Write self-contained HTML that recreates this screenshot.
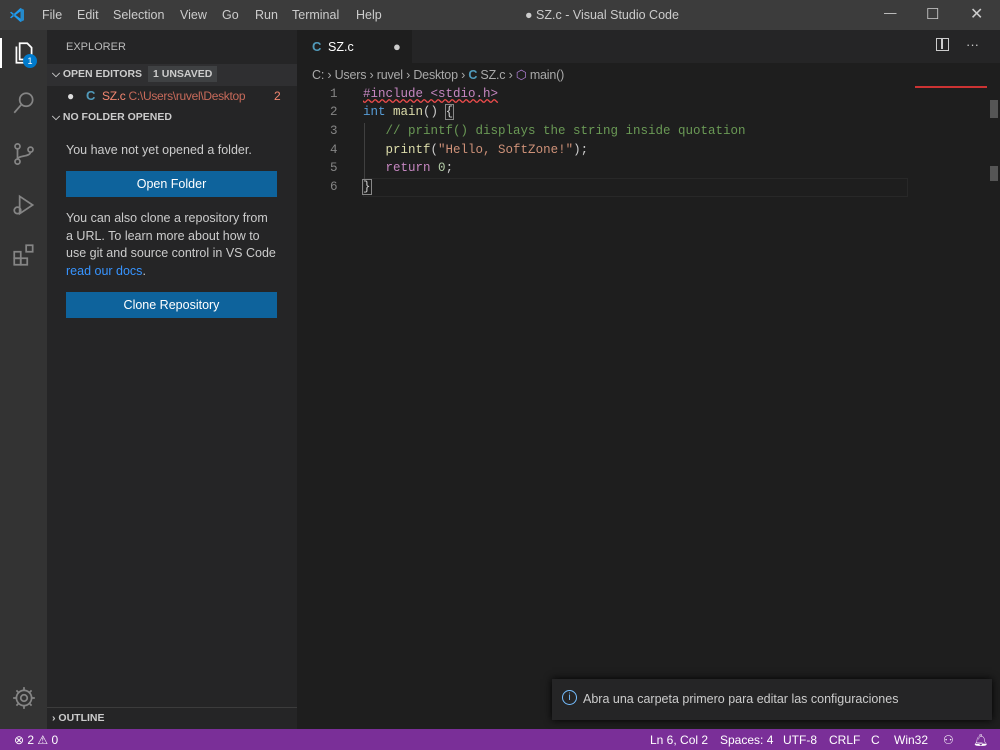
<!DOCTYPE html>
<html><head><meta charset="utf-8"><style>
*{margin:0;padding:0;box-sizing:border-box}
body{width:1000px;height:750px;overflow:hidden;background:#1e1e1e;font-family:"Liberation Sans",sans-serif;color:#ccc;position:relative;font-size:13px}
.abs{position:absolute}
#title{left:0;top:0;width:1000px;height:30px;background:#3c3c3c}
#title span{position:absolute;top:8px;font-size:12.5px;color:#ccc}
#act{left:0;top:30px;width:47px;height:699px;background:#333}
#side{left:47px;top:30px;width:250px;height:699px;background:#252526}
#tabs{left:297px;top:30px;width:703px;height:33px;background:#252526}
#tab{left:297px;top:30px;width:115px;height:33px;background:#1e1e1e}
#status{left:0;top:729px;width:1000px;height:21px;background:#7a2f98;color:#fff;font-size:12px}
#status span{position:absolute;top:4px}
.code{font-family:"Liberation Mono",monospace;font-size:12.5px;position:absolute;left:363px;white-space:pre}
.ln{font-family:"Liberation Mono",monospace;font-size:12.5px;position:absolute;left:330px;color:#858585}
.btn{position:absolute;left:66px;width:211px;height:26px;background:#0e639c;color:#fff;text-align:center;line-height:26px;font-size:12.5px}
.hdr{position:absolute;font-size:11px;font-weight:bold;color:#ccc}
</style></head><body>
<div id="title" class="abs">
<svg class="abs" style="left:9px;top:7px" width="16" height="16" viewBox="0 0 16 16"><path d="M11.5 1 L15 2.7 V13.3 L11.5 15 L4 8 Z" fill="#2489ca"/><path d="M11.5 4.5 V11.5 L6.5 8 Z" fill="#3c3c3c"/><path d="M1 5.5 L2.2 4.8 L11.5 12 V15 Z M1 10.5 L2.2 11.2 L11.5 4 V1Z" fill="#1f9cf0"/></svg>
<span style="left:42px">File</span><span style="left:77px">Edit</span><span style="left:113px">Selection</span><span style="left:180px">View</span><span style="left:222px">Go</span><span style="left:255px">Run</span><span style="left:292px">Terminal</span><span style="left:356px">Help</span>
<span style="left:525px">● SZ.c - Visual Studio Code</span>
<span style="left:884px;top:6px">—</span><span style="left:926px;top:5px;font-size:15px">☐</span><span style="left:970px;top:4px;font-size:16px">✕</span>
</div>
<div id="act" class="abs">
<div class="abs" style="left:0;top:8px;width:2px;height:30px;background:#fff"></div>
<svg class="abs" style="left:11px;top:10px" width="26" height="26" viewBox="0 0 24 24" fill="none" stroke="#fff" stroke-width="1.6"><path d="M8 3h7l4 4v11H8z"/><path d="M5 6v15h11"/></svg>
<div class="abs" style="left:23px;top:24px;width:14px;height:14px;border-radius:7px;background:#007acc;color:#fff;font-size:9px;text-align:center;line-height:14px">1</div>
<svg class="abs" style="left:11px;top:60px" width="26" height="26" viewBox="0 0 24 24" fill="none" stroke="#858585" stroke-width="1.6"><circle cx="14" cy="9" r="6"/><path d="M10 13L3 21"/></svg>
<svg class="abs" style="left:11px;top:111px" width="26" height="26" viewBox="0 0 24 24" fill="none" stroke="#858585" stroke-width="1.6"><circle cx="6" cy="5" r="2.3"/><circle cx="6" cy="19" r="2.3"/><circle cx="18" cy="8" r="2.3"/><path d="M6 7v10M18 10c0 5-12 3-12 7"/></svg>
<svg class="abs" style="left:11px;top:162px" width="26" height="26" viewBox="0 0 24 24" fill="none" stroke="#858585" stroke-width="1.6"><path d="M8 4l12 8-12 8z"/><circle cx="6" cy="17" r="3"/></svg>
<svg class="abs" style="left:11px;top:212px" width="26" height="26" viewBox="0 0 24 24" fill="none" stroke="#858585" stroke-width="1.6"><rect x="3" y="9" width="6" height="6"/><rect x="3" y="15" width="6" height="6"/><rect x="9" y="15" width="6" height="6"/><rect x="14" y="3" width="6" height="6"/></svg>
<svg class="abs" style="left:11px;top:655px" width="26" height="26" viewBox="0 0 24 24" fill="none" stroke="#858585" stroke-width="1.6"><circle cx="12" cy="12" r="3"/><path d="M12 2v3M12 19v3M2 12h3M19 12h3M5 5l2 2M17 17l2 2M5 19l2-2M17 7l2-2"/><circle cx="12" cy="12" r="7"/></svg>
</div>
<div id="side" class="abs">
<div class="abs" style="left:19px;top:11px;font-size:11px;color:#bbb">EXPLORER</div>
<div class="abs" style="left:0;top:34px;width:250px;height:22px;background:#2f2f31"></div>
<div class="hdr" style="left:5px;top:38px;font-size:10.5px">⌵ OPEN EDITORS</div>
<div class="abs" style="left:101px;top:36px;background:#3f4143;padding:2px 5px;font-size:10.5px;font-weight:bold;color:#ccc">1 UNSAVED</div>
<div class="abs" style="left:20px;top:59px;font-size:12px;color:#ddd">●</div>
<div class="abs" style="left:39px;top:58px;font-weight:bold;color:#519aba">C</div>
<div class="abs" style="left:55px;top:59px;color:#f48771;font-size:12px;letter-spacing:-0.3px">SZ.c <span style="color:#c76a5a">C:\Users\ruvel\Desktop</span></div>
<div class="abs" style="left:227px;top:59px;color:#f48771;font-size:12px">2</div>
<div class="hdr" style="left:5px;top:81px;font-size:10.5px">⌵ NO FOLDER OPENED</div>
<div class="abs" style="left:19px;top:113px;font-size:12.5px">You have not yet opened a folder.</div>
<div class="btn" style="left:19px;top:141px">Open Folder</div>
<div class="abs" style="left:19px;top:180px;width:230px;line-height:17.7px;font-size:12.5px;white-space:nowrap">You can also clone a repository from<br>a URL. To learn more about how to<br>use git and source control in VS Code<br><span style="color:#3794ff">read our docs</span>.</div>
<div class="btn" style="left:19px;top:262px">Clone Repository</div>
<div class="abs" style="left:0;top:677px;width:250px;height:1px;background:#3c3c3c"></div>
<div class="hdr" style="left:5px;top:682px;font-size:10.5px">› OUTLINE</div>
</div>
<div id="tabs" class="abs"></div>
<div id="tab" class="abs">
<div class="abs" style="left:15px;top:9px;font-weight:bold;color:#519aba">C</div>
<div class="abs" style="left:31px;top:10px;color:#fff;font-size:12.5px">SZ.c</div>
<div class="abs" style="left:96px;top:9px;color:#ccc">●</div>
</div>
<div class="abs" style="left:936px;top:38px;width:13px;height:13px;border:1.5px solid #ccc"><div style="margin-left:4px;width:1.5px;height:10px;background:#ccc"></div></div>
<div class="abs" style="left:966px;top:37px;color:#ccc">···</div>
<div class="abs" style="left:312px;top:67px;color:#a9a9a9;font-size:12.5px;letter-spacing:-0.2px">C: › Users › ruvel › Desktop › <b style="color:#519aba">C</b> SZ.c › <span style="color:#b180d7">⬡</span> main()</div>
<div class="ln" style="top:87px">1</div><div class="ln" style="top:105px">2</div><div class="ln" style="top:124px">3</div><div class="ln" style="top:143px">4</div><div class="ln" style="top:161px">5</div><div class="ln" style="top:180px">6</div>
<div class="code" style="top:87px;color:#c586c0;text-decoration:underline wavy #f14c4c">#include &lt;stdio.h&gt;</div>
<div class="code" style="top:105px"><span style="color:#569cd6">int</span> <span style="color:#dcdcaa">main</span>() <span style="outline:1px solid #888">{</span></div>
<div class="code" style="top:124px;color:#6a9955">   // printf() displays the string inside quotation</div>
<div class="code" style="top:143px">   <span style="color:#dcdcaa">printf</span>(<span style="color:#ce9178">"Hello, SoftZone!"</span>);</div>
<div class="code" style="top:161px">   <span style="color:#c586c0">return</span> <span style="color:#b5cea8">0</span>;</div>
<div class="abs" style="left:363px;top:178px;width:545px;height:19px;border:1px solid #282828"></div>
<div class="code" style="top:180px"><span style="outline:1px solid #888">}</span></div>
<div class="abs" style="left:364px;top:123px;width:1px;height:56px;background:#404040"></div>
<div class="abs" style="left:990px;top:100px;width:8px;height:18px;background:#555"></div>
<div class="abs" style="left:990px;top:166px;width:8px;height:15px;background:#555"></div>
<div class="abs" style="left:915px;top:86px;width:72px;height:10px;border-top:2px solid #c33"></div>
<div class="abs" style="left:552px;top:679px;width:440px;height:41px;background:#252526;box-shadow:0 0 8px #000"></div>
<div class="abs" style="left:562px;top:690px;width:15px;height:15px;border:1.3px solid #75beff;border-radius:50%;color:#75beff;font-size:10px;text-align:center;line-height:13px">i</div>
<div class="abs" style="left:583px;top:692px;color:#ccc;font-size:12.5px">Abra una carpeta primero para editar las configuraciones</div>
<div id="status" class="abs">
<span style="left:14px">⊗ 2 ⚠ 0</span>
<span style="left:650px">Ln 6, Col 2</span><span style="left:720px">Spaces: 4</span><span style="left:783px">UTF-8</span><span style="left:829px">CRLF</span><span style="left:871px">C</span><span style="left:894px">Win32</span><span style="left:943px">⚇</span><span style="left:973px">🔔︎</span>
</div>
</body></html>
